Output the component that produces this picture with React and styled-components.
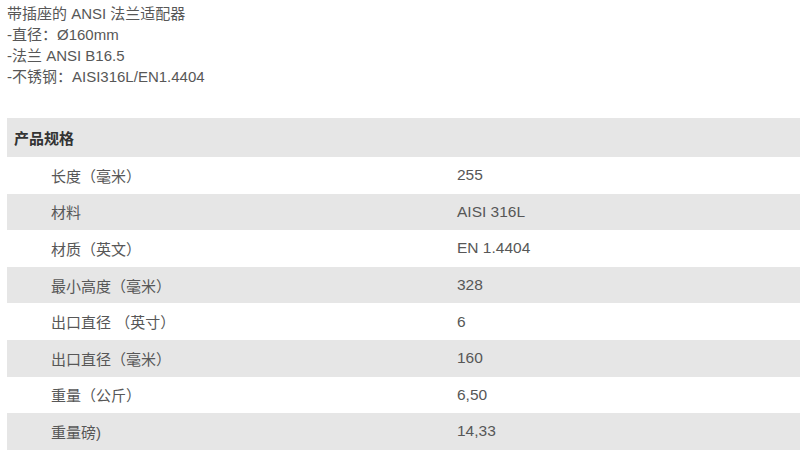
import React from "react";
import styled, { createGlobalStyle } from "styled-components";

const GlobalStyle = createGlobalStyle`
  body {
    margin: 0;
    background: #ffffff;
    font-family: "Liberation Sans", "Noto Sans CJK SC", sans-serif;
  }
`;

const specs = [
  { label: "长度（毫米）", value: "255" },
  { label: "材料", value: "AISI 316L" },
  { label: "材质（英文）", value: "EN 1.4404" },
  { label: "最小高度（毫米）", value: "328" },
  { label: "出口直径 （英寸）", value: "6" },
  { label: "出口直径（毫米）", value: "160" },
  { label: "重量（公斤）", value: "6,50" },
  { label: "重量磅)", value: "14,33" },
];

const App = () => {
  return (
    <Page>
      <GlobalStyle />
      <Intro>
        <Line>带插座的 ANSI 法兰适配器</Line>
        <Line>-直径：Ø160mm</Line>
        <Line>-法兰 ANSI B16.5</Line>
        <Line>-不锈钢：AISI316L/EN1.4404</Line>
      </Intro>
      <Table>
        <Header>产品规格</Header>
        {specs.map(({ label, value }, i) => (
          <Row key={label} $shaded={i % 2 === 1}>
            <Label>{label}</Label>
            <Value>{value}</Value>
          </Row>
        ))}
      </Table>
    </Page>
  );
};

export default App;

const Page = styled.div`
  padding: 3px 0 0 7px;
  color: #575757;
  font-size: 15px;
`;

const Intro = styled.div`
  display: flex;
  flex-direction: column;
  height: 115px;
`;

const Line = styled.div`
  line-height: 21px;
  white-space: nowrap;
`;

const Table = styled.div`
  display: flex;
  flex-direction: column;
`;

const Header = styled.div`
  height: 39px;
  display: flex;
  align-items: center;
  padding-left: 7px;
  background: #e6e6e6;
  color: #333;
  font-weight: bold;
`;

const Row = styled.div`
  height: 36.6px;
  display: grid;
  grid-template-columns: 406px 1fr;
  align-items: center;
  padding-left: 44px;
  background: ${({ $shaded }) => ($shaded ? "#e6e6e6" : "#ffffff")};
`;

const Label = styled.div`
  white-space: nowrap;
`;

const Value = styled.div`
  white-space: nowrap;
  font-size: 15.5px;
`;
